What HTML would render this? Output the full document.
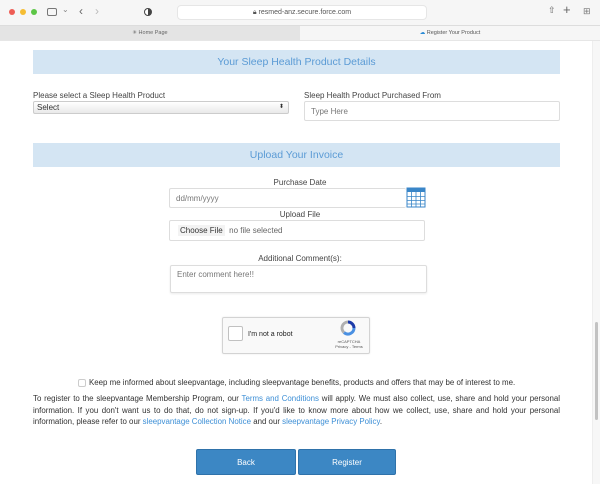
<!DOCTYPE html>
<html><head><style>
*{margin:0;padding:0;box-sizing:border-box}
body{width:600px;height:484px;overflow:hidden;background:#fff;font-family:"Liberation Sans",sans-serif;position:relative;color:#333}
.a{position:absolute}
.hdr{position:absolute;left:33px;width:527px;height:24px;background:#d4e5f3;color:#5b9bd5;font-size:10.5px;text-align:center;line-height:24px}
.lbl{position:absolute;font-size:8px;color:#444}
.inp{position:absolute;border:1px solid #ddd;border-radius:2px;background:#fff;font-size:8px;color:#777;padding-left:6px}
a{color:#3d8fd6;text-decoration:none}
.btn{position:absolute;top:449px;height:26px;background:#3c87c4;border:1px solid #2f72aa;border-radius:2px;color:#fff;font-size:8px;text-align:center;line-height:25px}
</style></head><body>
<div class="a" style="left:0;top:0;width:600px;height:25px;background:#f6f6f6"></div>
<div class="a" style="left:9px;top:9px;width:6px;height:6px;border-radius:50%;background:#ee5d55"></div>
<div class="a" style="left:20px;top:9px;width:6px;height:6px;border-radius:50%;background:#f5bd33"></div>
<div class="a" style="left:31px;top:9px;width:6px;height:6px;border-radius:50%;background:#5dc646"></div>
<div class="a" style="left:47px;top:8px;width:10px;height:8px;border:1px solid #777;border-radius:2px"></div>
<div class="a" style="left:62px;top:5px;font-size:8px;color:#888">⌄</div>
<div class="a" style="left:79px;top:4px;font-size:12px;color:#666">‹</div>
<div class="a" style="left:95px;top:4px;font-size:12px;color:#bbb">›</div>
<div class="a" style="left:144px;top:8px;width:8px;height:8px;border:1px solid #444;border-radius:50%;background:linear-gradient(90deg,#fff 50%,#444 50%)"></div>
<div class="a" style="left:177px;top:5px;width:250px;height:15px;background:#fff;border-radius:4px;border:1px solid #e6e6e6;font-size:7px;color:#555;text-align:center;line-height:13px">🔒︎ resmed-anz.secure.force.com</div>
<div class="a" style="left:548px;top:5px;font-size:9px;color:#666">⇧</div>
<div class="a" style="left:563px;top:2px;font-size:13px;color:#666">+</div>
<div class="a" style="left:583px;top:6px;font-size:9px;color:#777">⊞</div>
<div class="a" style="left:0;top:25px;width:300px;height:15px;background:#e4e4e4;font-size:5.5px;color:#666;text-align:center;line-height:15px;border-top:1px solid #ddd">✳ Home Page</div>
<div class="a" style="left:300px;top:25px;width:300px;height:15px;background:#f6f6f6;font-size:5.5px;color:#555;text-align:center;line-height:15px;border-top:1px solid #ddd"><span style="color:#2b8bd6">☁</span> Register Your Product</div>
<div class="a" style="left:0;top:40px;width:600px;height:1px;background:#e6e6e6"></div>
<div class="a" style="left:592px;top:41px;width:8px;height:443px;background:#f7f7f7;border-left:1px solid #eee"></div>
<div class="a" style="left:595px;top:322px;width:3px;height:98px;background:#c2c2c2;border-radius:2px"></div>

<div class="hdr" style="top:50px">Your Sleep Health Product Details</div>
<div class="lbl" style="left:33px;top:91px">Please select a Sleep Health Product</div>
<div class="a" style="left:33px;top:101px;width:256px;height:13px;border:1px solid #ccc;border-radius:2px;background:linear-gradient(#fff,#e9e9e9);font-size:8px;line-height:11px;padding-left:3px">Select<span style="position:absolute;right:4px;top:0;font-size:6px">⬍</span></div>
<div class="lbl" style="left:304px;top:91px">Sleep Health Product Purchased From</div>
<div class="inp" style="left:304px;top:101px;width:256px;height:20px;line-height:19px">Type Here</div>

<div class="hdr" style="top:143px">Upload Your Invoice</div>
<div class="lbl" style="left:0;width:600px;text-align:center;top:178px">Purchase Date</div>
<div class="inp" style="left:169px;top:188px;width:237px;height:20px;line-height:19px;border-right:none">dd/mm/yyyy</div>
<svg class="a" style="left:406px;top:187px" width="20" height="21" viewBox="0 0 20 21"><rect x="1" y="1" width="18" height="19" fill="#fff" stroke="#3a86c8"/><rect x="1" y="1" width="18" height="4" fill="#3a86c8"/><path d="M1 9.5H19M1 13.5H19M1 17H19M5.5 5V20M10 5V20M14.5 5V20" stroke="#3a86c8" stroke-width=".8"/></svg>
<div class="lbl" style="left:0;width:600px;text-align:center;top:210px">Upload File</div>
<div class="inp" style="left:169px;top:220px;width:256px;height:21px;line-height:20px;padding-left:8px;color:#666"><span style="color:#333;background:#f3f3f3;padding:1px 2px">Choose File</span> &nbsp;no file selected</div>
<div class="lbl" style="left:0;width:600px;text-align:center;top:254px">Additional Comment(s):</div>
<div class="inp" style="left:170px;top:265px;width:257px;height:28px;padding-top:4px;box-shadow:0 1px 2px rgba(0,0,0,.08)">Enter comment here!!</div>

<div class="a" style="left:222px;top:317px;width:148px;height:37px;background:#f9f9f9;border:1px solid #d3d3d3;border-radius:2px;box-shadow:0 0 2px rgba(0,0,0,.08)"></div>
<div class="a" style="left:228px;top:326px;width:15px;height:15px;background:#fff;border:1.5px solid #c1c1c1;border-radius:2px"></div>
<div class="a" style="left:248px;top:331px;font-size:7px;color:#222">I'm not a robot</div>
<svg class="a" style="left:340px;top:320px" width="16" height="16" viewBox="0 0 16 16"><path d="M8 2A6 6 0 0 1 14 8" stroke="#1c3aa9" stroke-width="3" fill="none"/><path d="M14 8A6 6 0 0 1 4 12.5" stroke="#4a90e2" stroke-width="3" fill="none"/><path d="M4 12.5A6 6 0 0 1 8 2" stroke="#b0b0b0" stroke-width="3" fill="none"/></svg>
<div class="a" style="left:333px;top:339px;width:32px;text-align:center;font-size:4px;color:#555">reCAPTCHA<br>Privacy - Terms</div>

<div class="a" style="left:78px;top:379px;width:8px;height:8px;border:1px solid #ccc;border-radius:2px"></div>
<div class="a" style="left:89px;top:378px;font-size:7.9px;color:#333;white-space:nowrap">Keep me informed about sleepvantage, including sleepvantage benefits, products and offers that may be of interest to me.</div>
<div class="a" style="left:33px;top:393px;width:527px;font-size:7.9px;line-height:11.5px;text-align:justify;color:#333">To register to the sleepvantage Membership Program, our <a>Terms and Conditions</a> will apply. We must also collect, use, share and hold your personal information. If you don't want us to do that, do not sign-up. If you'd like to know more about how we collect, use, share and hold your personal information, please refer to our <a>sleepvantage Collection Notice</a> and our <a>sleepvantage Privacy Policy</a>.</div>

<div class="btn" style="left:196px;width:100px">Back</div>
<div class="btn" style="left:298px;width:98px">Register</div>
</body></html>
